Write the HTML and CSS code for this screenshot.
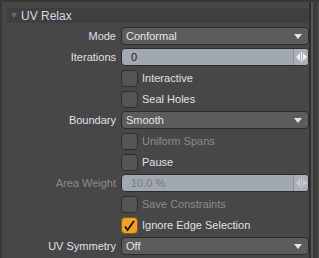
FILE: index.html
```html
<!DOCTYPE html>
<html lang="en">
<head>
<meta charset="UTF-8">
<title>UV Relax</title>
<link rel="stylesheet" href="styles.css">
</head>
<body>
<div class="window">
  <div class="panel">
    <div class="header">
      <span class="caret"></span>
      <span class="title">UV Relax</span>
    </div>

    <div class="form">
      <label class="label">Mode</label>
      <div class="dropdown"><span>Conformal</span><span class="arrow"></span></div>

      <label class="label">Iterations</label>
      <div class="field"><span class="value">0</span><span class="spin"><i class="l"></i><i class="bar"></i><i class="r"></i></span></div>

      <span></span>
      <div class="check"><span class="box"></span><span>Interactive</span></div>

      <span></span>
      <div class="check"><span class="box"></span><span>Seal Holes</span></div>

      <label class="label">Boundary</label>
      <div class="dropdown"><span>Smooth</span><span class="arrow"></span></div>

      <span></span>
      <div class="check disabled"><span class="box"></span><span>Uniform Spans</span></div>

      <span></span>
      <div class="check"><span class="box"></span><span>Pause</span></div>

      <label class="label disabled">Area Weight</label>
      <div class="field disabled"><span class="value">10.0 %</span><span class="spin"><i class="l"></i><i class="bar"></i><i class="r"></i></span></div>

      <span></span>
      <div class="check disabled"><span class="box"></span><span>Save Constraints</span></div>

      <span></span>
      <div class="check"><span class="box on">
        <svg width="13" height="13" viewBox="0 0 13 13"><path d="M2 7.5 L4.5 11 L11 2" fill="none" stroke="#111" stroke-width="1.8"/></svg>
      </span><span>Ignore Edge Selection</span></div>

      <label class="label">UV Symmetry</label>
      <div class="dropdown"><span>Off</span><span class="arrow"></span></div>
    </div>
  </div>
  <div class="side"></div>
</div>
</body>
</html>
```

FILE: styles.css
```css
body {
  margin: 0;
  background-color: #474747;
  font-family: "Liberation Sans", Arial, sans-serif;
  font-size: 11px;
  color: #dfe2ea;
  width: 319px;
  height: 258px;
  overflow: hidden;
}

.window {
  display: flex;
  height: 258px;
  border-top: 2px solid #383838;
  box-sizing: border-box;
}

.panel {
  flex: 1;
  border-left: 2px solid #383838;
  border-right: 2px solid #2e2e2e;
  padding: 6px 0 0 4px;
}

.side {
  width: 6px;
  border-left: 2px solid #575757;
  background-color: #3c3c3c;
  box-shadow: inset -2px 0 0 #474747;
}

.header {
  display: flex;
  align-items: center;
  height: 15px;
  width: 303px;
  background-color: #3f3f3f;
  border-radius: 4px;
  margin-bottom: 4px;
}

.caret {
  width: 0;
  height: 0;
  margin-left: 5px;
  margin-right: 4px;
  border-left: 3.5px solid transparent;
  border-right: 3.5px solid transparent;
  border-top: 5px solid #6a6a6a;
}

.title {
  font-size: 12px;
  color: #d4dae8;
}

.form {
  display: grid;
  grid-template-columns: 110px 188px;
  grid-auto-rows: 18px;
  column-gap: 5px;
  row-gap: 3px;
}

.label {
  text-align: right;
  line-height: 18px;
  white-space: nowrap;
}

.disabled {
  color: #8b8b8b;
}

.dropdown {
  display: flex;
  align-items: center;
  justify-content: space-between;
  box-sizing: border-box;
  border: 1px solid #2b2b2b;
  border-radius: 4px;
  background-color: #5c5c5c;
  padding: 0 6px 0 4px;
  color: #e4e6ec;
}

.arrow {
  width: 0;
  height: 0;
  border-left: 4px solid transparent;
  border-right: 4px solid transparent;
  border-top: 5px solid #e6e6e6;
}

.field {
  display: flex;
  box-sizing: border-box;
  border: 1px solid #2b2b2b;
  border-radius: 4px;
  background-color: #a1a8b0;
  color: #161616;
  overflow: hidden;
}

.field .value {
  flex: 1;
  line-height: 16px;
  padding-left: 9px;
}

.field.disabled .value {
  color: #757b83;
}

.spin {
  display: flex;
  align-items: center;
  justify-content: center;
  gap: 1px;
  width: 14px;
  border-left: 1px solid #8a9098;
  background-color: #a9b0b8;
}

.spin .l {
  border-top: 4px solid transparent;
  border-bottom: 4px solid transparent;
  border-right: 4px solid #eef0f2;
}

.spin .r {
  border-top: 4px solid transparent;
  border-bottom: 4px solid transparent;
  border-left: 4px solid #eef0f2;
}

.spin .bar {
  width: 1px;
  height: 10px;
  background-color: #eef0f2;
}

.field.disabled .spin i {
  opacity: 0.45;
}

.check {
  display: flex;
  align-items: center;
  gap: 4px;
}

.box {
  display: flex;
  align-items: center;
  justify-content: center;
  box-sizing: border-box;
  width: 17px;
  height: 17px;
  border: 1px solid #2e2e2e;
  border-radius: 4px;
  background-color: #555555;
}

.box.on {
  background-color: #f0a12a;
  border-color: #8a5a10;
}
```
